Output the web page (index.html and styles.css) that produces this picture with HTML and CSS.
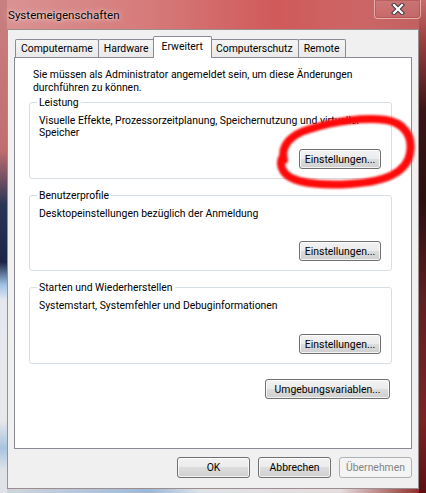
FILE: index.html
```html
<!DOCTYPE html>
<html lang="de">
<head>
<meta charset="utf-8">
<title>Systemeigenschaften</title>
<link rel="stylesheet" href="styles.css">
</head>
<body>
<div class="window">
  <div class="titlebar">
    <span class="title">Systemeigenschaften</span>
    <div class="close">
      <svg width="14" height="12" viewBox="0 0 14 12">
        <path d="M3 2 L11 10 M11 2 L3 10" stroke="#3c3c44" stroke-width="4.2" stroke-linecap="square"/>
        <path d="M3 2 L11 10 M11 2 L3 10" stroke="#ffffff" stroke-width="2.2" stroke-linecap="square"/>
      </svg>
    </div>
  </div>
  <div class="client">
    <div class="tabs">
      <div class="tab">Computername</div>
      <div class="tab">Hardware</div>
      <div class="tab active">Erweitert</div>
      <div class="tab">Computerschutz</div>
      <div class="tab">Remote</div>
    </div>
    <div class="panel">
      <p class="intro">Sie müssen als Administrator angemeldet sein, um diese Änderungen<br>durchführen zu können.</p>
      <div class="group g1">
        <span class="legend">Leistung</span>
        <p class="gtext">Visuelle Effekte, Prozessorzeitplanung, Speichernutzung und virtueller<br>Speicher</p>
        <button class="btn set">Einstellungen...</button>
      </div>
      <div class="group g2">
        <span class="legend">Benutzerprofile</span>
        <p class="gtext">Desktopeinstellungen bezüglich der Anmeldung</p>
        <button class="btn set">Einstellungen...</button>
      </div>
      <div class="group g3">
        <span class="legend">Starten und Wiederherstellen</span>
        <p class="gtext">Systemstart, Systemfehler und Debuginformationen</p>
        <button class="btn set">Einstellungen...</button>
      </div>
      <div class="env-row">
        <button class="btn env">Umgebungsvariablen...</button>
      </div>
    </div>
    <div class="footer">
      <button class="btn dlg">OK</button>
      <button class="btn dlg">Abbrechen</button>
      <button class="btn dlg" disabled>Übernehmen</button>
    </div>
  </div>
  <svg class="mark" width="426" height="493" viewBox="0 0 426 493">
    <path d="M284 160 C280 145 292 134 310 129 C335 121 365 117 386 120 C405 123 413 137 410 153 C407 172 385 182 350 184 C315 186 291 182 284 172 C280 166 280 161 283 156" fill="none" stroke="#ff0a0a" stroke-width="8" stroke-linecap="round"/>
  </svg>
</div>
</body>
</html>
```
FILE: styles.css
```css
* { box-sizing: border-box; }

html, body {
  margin: 0;
  padding: 0;
}

body {
  width: 426px;
  height: 493px;
  overflow: hidden;
  font-family: Roboto, "Liberation Sans", sans-serif;
  font-size: 10.4px;
  color: #000;
}

.window {
  position: relative;
  width: 426px;
  height: 493px;
  display: flex;
  flex-direction: column;
  padding: 0 7px 4px 7px;
  background:
    linear-gradient(to bottom, #c98080 0, #bf6e6e 150px, #2a3558 205px, #1b2446 262px, #9fc3e6 285px, #e4e8ee 300px, #e8e8ec 420px, #a9c4e0 448px, #dfe3e8 470px) left top / 7px 100% no-repeat,
    linear-gradient(to bottom, #c86a6a 0, #9a4040 40px, #3a1616 110px, #2a1010 200px, #5e2020 300px, #7a2424 420px, #5a1010 493px) right top / 7px 100% no-repeat,
    linear-gradient(to right, #d4d6da 0, #9cb8d8 150px, #dfe2e6 200px, #e6dede 340px, #8a2020 426px) left bottom / 100% 4px no-repeat,
    linear-gradient(to right, #d99393 0, #d67a7a 35%, #d05a5a 65%, #cc6666 85%, #c06060 100%);
}

.titlebar {
  height: 29px;
  display: flex;
  align-items: flex-start;
  padding-left: 1px;
  margin-right: -2px;
}

.title {
  margin-top: 8px;
  font-size: 11.6px;
  line-height: 14px;
  text-shadow: 0 0 6px rgba(255, 235, 235, 0.9), 0 0 2px rgba(255, 240, 240, 0.8);
}

.close {
  margin-left: auto;
  width: 47px;
  height: 19px;
  border: 1px solid rgba(255, 220, 220, 0.55);
  border-top: none;
  border-radius: 0 0 4px 4px;
  box-shadow: inset 0 0 0 1px rgba(120, 40, 40, 0.25);
  background: linear-gradient(to bottom, rgba(255, 255, 255, 0.12), rgba(255, 255, 255, 0.04));
  display: flex;
  align-items: center;
  justify-content: center;
}

.client {
  height: 460px;
  background: #f0f0f0;
  border: 1px solid #9c8e8e;
  padding: 6px 6px 0 6px;
  display: flex;
  flex-direction: column;
}

.tabs {
  height: 22px;
  margin-bottom: -1px;
  display: flex;
  align-items: flex-end;
  padding-left: 1px;
  position: relative;
  z-index: 2;
}

.tab {
  height: 18px;
  margin-bottom: 1px;
  padding: 0 5px;
  line-height: 17px;
  border: 1px solid #898c95;
  border-bottom: none;
  border-radius: 2px 2px 0 0;
  background: linear-gradient(to bottom, #f5f5f5, #e9e9e9);
  white-space: nowrap;
}

.tab + .tab {
  margin-left: -1px;
}

.tab.active {
  height: 22px;
  margin-bottom: 0;
  margin-left: -2px;
  margin-right: -2px;
  padding: 0 8px 2px;
  line-height: 19px;
  background: #fff;
  position: relative;
  z-index: 3;
}

.tab.active + .tab {
  margin-left: 0;
}

.panel {
  height: 392px;
  background: #fff;
  border: 1px solid #898c95;
  padding: 11px 19px 0 14px;
  display: flex;
  flex-direction: column;
}

.intro {
  margin: 0 0 0 4px;
  line-height: 12.5px;
}

.group {
  border: 1px solid #d5dfe5;
  border-radius: 3px;
  padding: 0 10px 9px 9px;
  display: flex;
  flex-direction: column;
}

.g1 { margin-top: 8px; height: 77px; }
.g2 { margin-top: 16px; height: 76px; }
.g3 { margin-top: 16px; height: 77px; }

.legend {
  align-self: flex-start;
  margin: -7px 0 0 -2px;
  padding: 0 2px;
  line-height: 13px;
  background: #fff;
}

.gtext {
  margin: 6px 0 0 0;
  line-height: 11.6px;
}

.btn {
  font: inherit;
  color: #000;
  height: 20px;
  padding: 0;
  border: 1px solid #707070;
  border-radius: 3px;
  background: linear-gradient(to bottom, #f2f2f2 0%, #ebebeb 50%, #dddddd 50%, #cfcfcf 100%);
  box-shadow: inset 0 0 0 1px rgba(255, 255, 255, 0.75);
  text-align: center;
}

.btn.set {
  margin-top: auto;
  align-self: flex-end;
  width: 82px;
}

.env-row {
  margin-top: 15px;
  display: flex;
  justify-content: flex-end;
  padding-right: 2px;
}

.btn.env {
  width: 125px;
}

.footer {
  margin-top: 8px;
  display: flex;
  justify-content: flex-end;
  gap: 8px;
}

.btn.dlg {
  width: 73px;
  height: 21px;
}

.btn:disabled {
  color: #838383;
  border-color: #adb2b5;
  background: #f4f4f4;
  box-shadow: none;
}

.mark {
  position: absolute;
  left: 0;
  top: 0;
  pointer-events: none;
  filter: blur(0.9px);
  z-index: 10;
}
```
